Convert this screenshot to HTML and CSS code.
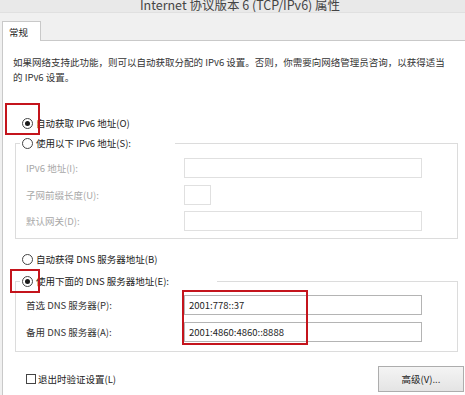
FILE: index.html
```html
<!DOCTYPE html>
<html lang="zh-CN">
<head>
    <meta charset="UTF-8">
    <title>Internet 协议版本 6 (TCP/IPv6) 属性</title>
    <link rel="stylesheet" href="styles.css">
</head>
<body>
    <div class="window">
        <div class="titlebar">Internet 协议版本 6 (TCP/IPv6) 属性</div>
        <div class="tabstrip">
            <div class="tab">常规</div>
        </div>
        <div class="panel">
            <p class="desc">如果网络支持此功能，则可以自动获取分配的 IPv6 设置。否则，你需要向网络管理员咨询，以获得适当<br>的 IPv6 设置。</p>

            <div class="radio first"><span class="dot checked"></span>自动获取 IPv6 地址(O)</div>

            <div class="group group-ip">
                <div class="group-head head-ip"><span class="dot"></span>使用以下 IPv6 地址(S):</div>
                <div class="rows rows-ip">
                    <div class="row disabled"><span class="label">IPv6 地址(I):</span><span class="field"></span></div>
                    <div class="row disabled"><span class="label">子网前缀长度(U):</span><span class="field short"></span></div>
                    <div class="row disabled"><span class="label">默认网关(D):</span><span class="field"></span></div>
                </div>
            </div>

            <div class="radio third"><span class="dot"></span>自动获得 DNS 服务器地址(B)</div>

            <div class="group group-dns">
                <div class="group-head head-dns"><span class="dot checked"></span>使用下面的 DNS 服务器地址(E):</div>
                <div class="rows rows-dns">
                    <div class="row"><span class="label">首选 DNS 服务器(P):</span><span class="field">2001:778::37</span></div>
                    <div class="row"><span class="label">备用 DNS 服务器(A):</span><span class="field">2001:4860:4860::8888</span></div>
                </div>
            </div>

            <div class="bottom">
                <div class="check"><span class="box"></span>退出时验证设置(L)</div>
                <div class="button">高级(V)...</div>
            </div>
        </div>

        <div class="mark mark-auto"></div>
        <div class="mark mark-manual"></div>
        <div class="mark mark-dns"></div>
    </div>
</body>
</html>
```

FILE: styles.css
```css
body {
    margin: 0;
    background: #f0f0f0;
    font-family: "Noto Sans CJK SC", "Noto Sans", sans-serif;
    font-size: 9.5px;
    color: #333;
}

.window {
    position: relative;
    width: 465px;
    height: 395px;
    overflow: hidden;
}

.titlebar {
    height: 13px;
    line-height: 9px;
    overflow: hidden;
    text-align: center;
    font-size: 12.5px;
    color: #444;
    background: #e9e9e9;
    padding-left: 15px;
    box-sizing: border-box;
    border-bottom: 1px solid #e0e0e0;
}

.tabstrip {
    height: 27px;
    padding: 7px 0 0 2px;
    box-sizing: border-box;
    display: flex;
    align-items: flex-end;
}

.tab {
    width: 39px;
    height: 20px;
    line-height: 20px;
    box-sizing: border-box;
    padding-left: 6px;
    background: #fff;
    border: 1px solid #c9c9c9;
    border-bottom: none;
    margin-bottom: -1px;
    position: relative;
    z-index: 1;
    color: #222;
}

.panel {
    margin-left: 2px;
    height: 356px;
    background: #fff;
    border-left: 1px solid #c9c9c9;
    border-top: 1px solid #c9c9c9;
}

.desc {
    margin: 14px 0 0 10px;
    line-height: 15px;
    white-space: nowrap;
    color: #333;
}

.radio,
.group-head {
    display: flex;
    align-items: center;
    gap: 3px;
    height: 16px;
    color: #222;
}

.radio {
    margin-left: 19px;
}

.radio.first {
    margin-top: 30px;
}

.radio.third {
    margin-top: 12px;
}

.dot {
    width: 11px;
    height: 11px;
    box-sizing: border-box;
    border: 1px solid #444;
    border-radius: 50%;
    background: #fff;
    display: flex;
    align-items: center;
    justify-content: center;
}

.dot.checked::after {
    content: "";
    width: 5px;
    height: 5px;
    border-radius: 50%;
    background: #1a1a1a;
}

.group {
    margin-left: 12px;
    width: 443px;
    box-sizing: border-box;
    border: 1px solid #dcdcdc;
    padding: 0 0 7px 10px;
}

.group-ip {
    margin-top: 12px;
}

.group-dns {
    margin-top: 14px;
    padding-bottom: 9px;
}

.group-head {
    margin: -9px 0 0 -6px;
    padding-left: 2px;
    background: #fff;
}

.head-ip {
    width: 153px;
}

.head-dns {
    width: 195px;
}

.rows {
    display: flex;
    flex-direction: column;
}

.rows-ip {
    margin-top: 7px;
    gap: 6.5px;
}

.rows-dns {
    margin-top: 6px;
    gap: 7px;
}

.row {
    display: flex;
    align-items: center;
    height: 20px;
}

.label {
    width: 158px;
    color: #333;
}

.row.disabled .label {
    color: #a8a8a8;
}

.field {
    width: 238px;
    height: 20px;
    box-sizing: border-box;
    border: 1px solid #b4b4b4;
    padding-left: 4px;
    line-height: 18px;
    color: #1e1e1e;
    background: #fff;
}

.row.disabled .field {
    border-color: #e0e0e0;
}

.field.short {
    width: 27px;
}

.bottom {
    margin-top: 14px;
    height: 26px;
    display: flex;
    align-items: center;
    justify-content: space-between;
    padding: 0 1px 0 23px;
}

.check {
    display: flex;
    align-items: center;
    gap: 2px;
    color: #222;
}

.box {
    width: 10px;
    height: 10px;
    box-sizing: border-box;
    border: 1px solid #444;
    background: #fff;
}

.button {
    width: 86px;
    height: 26px;
    line-height: 24px;
    box-sizing: border-box;
    text-align: center;
    border: 1px solid #adadad;
    background: linear-gradient(#f4f4f4, #e4e4e4);
    color: #222;
}

.mark {
    position: absolute;
    border: 2px solid #c4141c;
    box-sizing: border-box;
}

.mark-auto {
    left: 5px;
    top: 103px;
    width: 35px;
    height: 32px;
}

.mark-manual {
    left: 10px;
    top: 269px;
    width: 30px;
    height: 24px;
}

.mark-dns {
    left: 182px;
    top: 290px;
    width: 126px;
    height: 55px;
}
```
